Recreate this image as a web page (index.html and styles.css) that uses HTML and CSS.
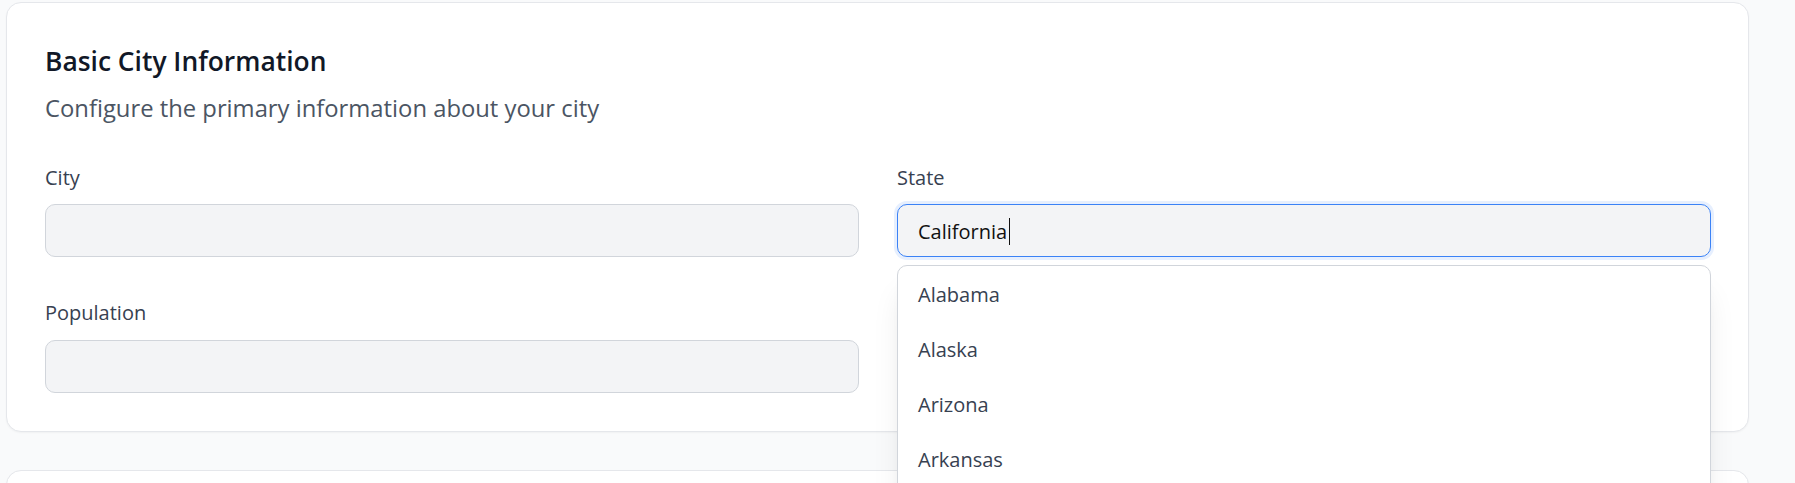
FILE: index.html
```html
<!DOCTYPE html>
<html lang="en">
<head>
<meta charset="utf-8">
<title>Basic City Information</title>
<link rel="stylesheet" href="styles.css">
</head>
<body>
<main class="page">
  <section class="card">
    <h2 class="card-title">Basic City Information</h2>
    <p class="card-subtitle">Configure the primary information about your city</p>
    <div class="form-grid">
      <div class="field">
        <label class="field-label">City</label>
        <div class="input"></div>
      </div>
      <div class="field field-state">
        <label class="field-label">State</label>
        <div class="input input-focused"><span class="input-text">California</span><span class="caret"></span></div>
        <ul class="dropdown">
          <li class="dropdown-item">Alabama</li>
          <li class="dropdown-item">Alaska</li>
          <li class="dropdown-item">Arizona</li>
          <li class="dropdown-item">Arkansas</li>
        </ul>
      </div>
      <div class="field">
        <label class="field-label">Population</label>
        <div class="input"></div>
      </div>
    </div>
  </section>
  <section class="card card-next"></section>
</main>
</body>
</html>
```
FILE: styles.css
```css
* { box-sizing: border-box; }

html, body {
  margin: 0;
  padding: 0;
  background: #f9fafb;
  font-family: "Open Sans", "Noto Sans", sans-serif;
  overflow: hidden;
  height: 483px;
}

.page {
  width: 1743px;
  margin-left: 6px;
  padding-top: 2px;
  display: flex;
  flex-direction: column;
  gap: 38px;
}

.card {
  background: #ffffff;
  border: 1px solid #e5e7eb;
  border-radius: 15px;
  box-shadow: 0 1px 2px rgba(0, 0, 0, 0.04);
  padding: 38px 37px 38px 38px;
}

.card-next {
  min-height: 160px;
}

.card-title {
  margin: 0;
  font-size: 26.4px;
  font-weight: 600;
  line-height: 40px;
  color: #111827;
}

.card-subtitle {
  margin: 10px 0 0;
  font-size: 23.8px;
  line-height: 34px;
  color: #4b5563;
}

.form-grid {
  margin-top: 38.5px;
  display: grid;
  grid-template-columns: 1fr 1fr;
  column-gap: 38px;
  row-gap: 42px;
}

.field {
  display: flex;
  flex-direction: column;
}

.field-state {
  position: relative;
}

.field-label {
  font-size: 20px;
  line-height: 28px;
  color: #374151;
  margin-bottom: 12.5px;
}

.input {
  height: 53px;
  background: #f3f4f6;
  border: 1px solid #d1d5db;
  border-radius: 10px;
  padding: 0 20px;
  display: flex;
  align-items: center;
  font-size: 20px;
  line-height: 28px;
  color: #111111;
}

.input-focused {
  border-color: #3b82f6;
  box-shadow: 0 0 0 3px rgba(59, 130, 246, 0.13);
}

.input-text {
  padding-top: 2px;
}

.caret {
  display: inline-block;
  width: 1px;
  height: 27px;
  margin-left: 2px;
  margin-top: 2px;
  background: #111111;
}

.dropdown {
  position: absolute;
  left: 0;
  right: 0;
  top: calc(100% + 7.5px);
  height: 240px;
  margin: 0;
  padding: 1.5px 0 0;
  list-style: none;
  background: #ffffff;
  border: 1px solid #d1d5db;
  border-radius: 10px;
  box-shadow: 0 25px 31px -6px rgba(0, 0, 0, 0.1), 0 10px 12px -7px rgba(0, 0, 0, 0.1);
  z-index: 10;
}

.dropdown-item {
  padding: 12.5px 20px;
  font-size: 20px;
  line-height: 30px;
  color: #374151;
}
```
